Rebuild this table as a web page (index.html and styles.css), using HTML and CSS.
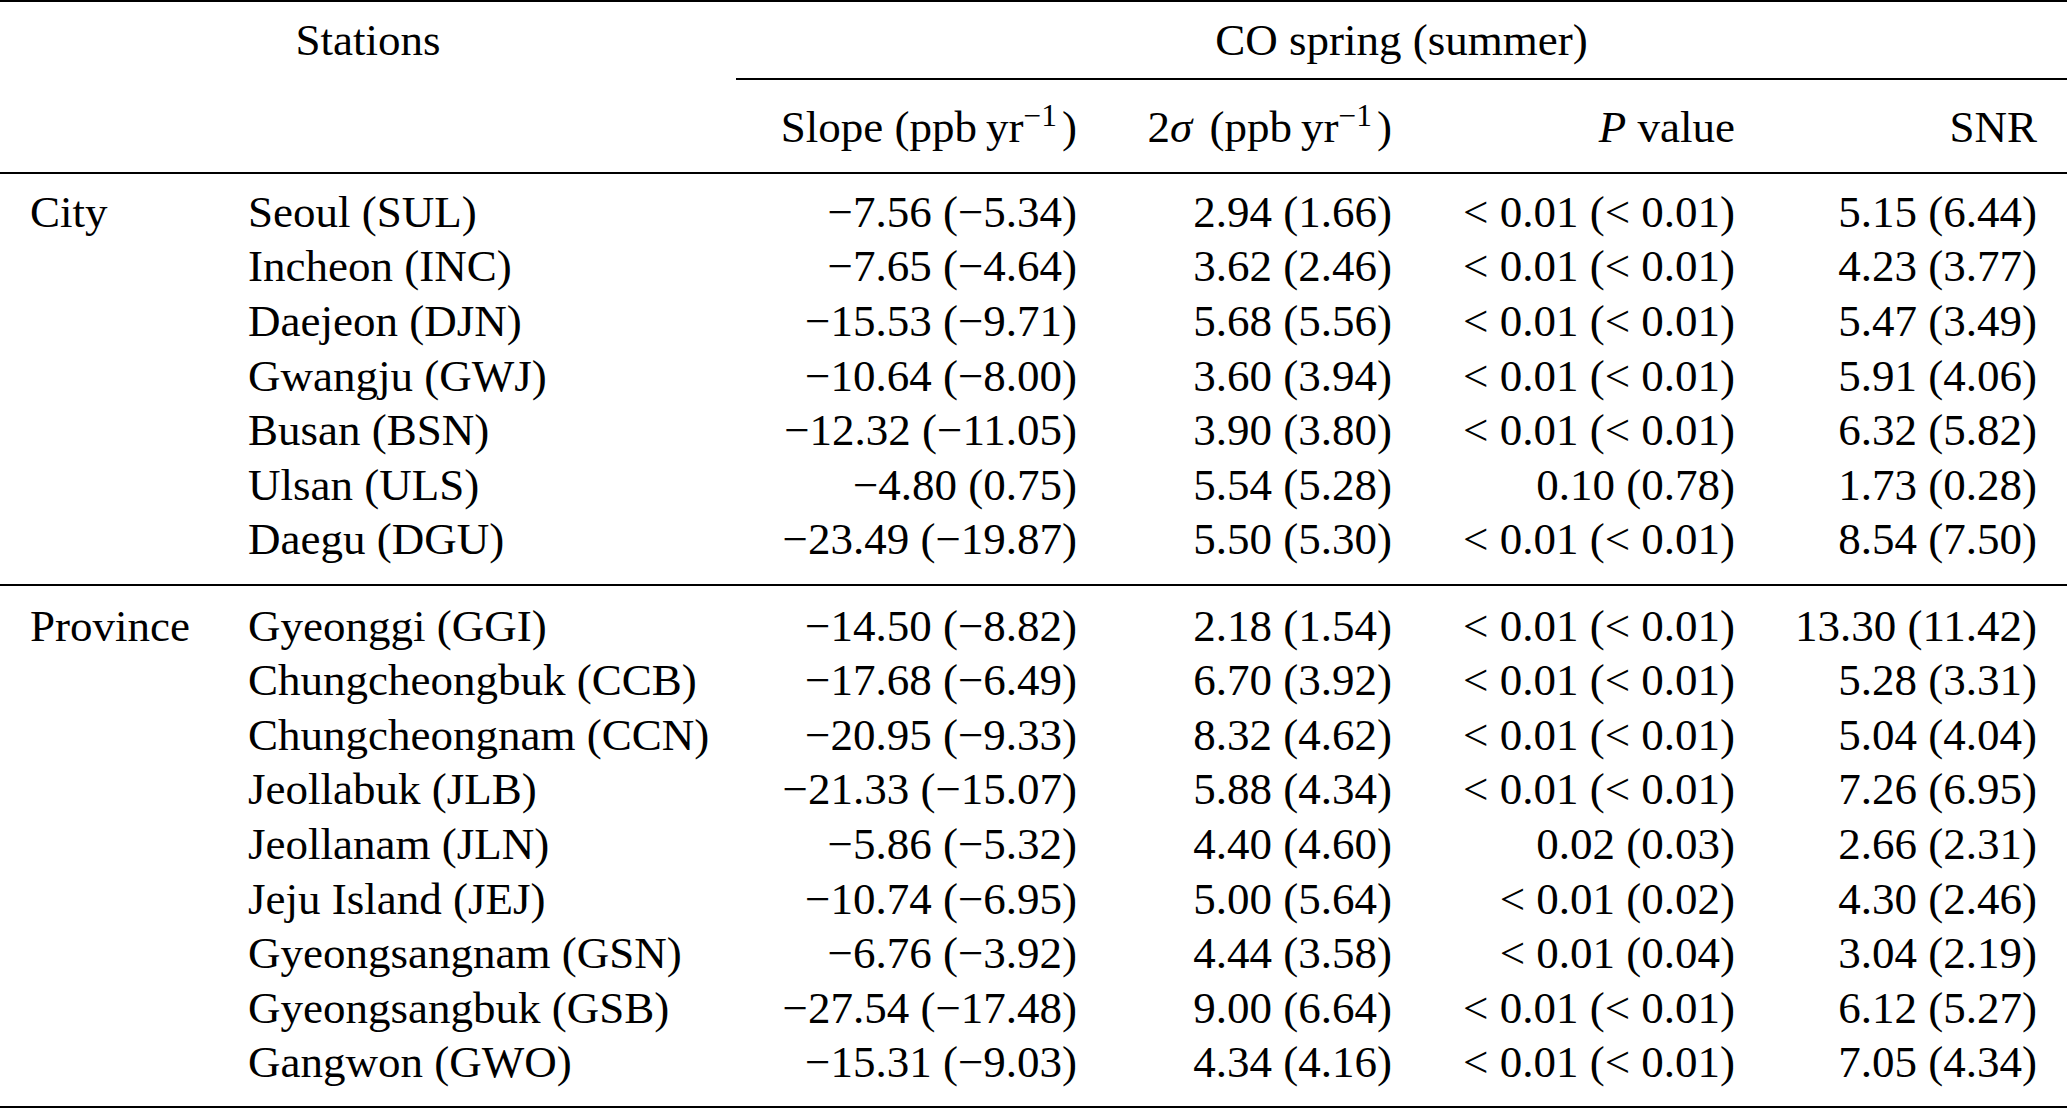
FILE: index.html
```html
<!DOCTYPE html>
<html lang="en">
<head>
<meta charset="utf-8">
<title>CO trends</title>
<link rel="stylesheet" href="styles.css">
</head>
<body>
<table class="tbl">
  <colgroup>
    <col class="c1"><col class="c2"><col class="c3"><col class="c4"><col class="c5"><col class="c6">
  </colgroup>
  <thead>
    <tr class="h1">
      <th colspan="2" class="ctr">Stations</th>
      <th colspan="4" class="ctr cmid">CO spring (summer)</th>
    </tr>
    <tr class="h2">
      <th></th>
      <th></th>
      <th class="r">Slope (ppb&#8201;yr<span class="sup">−1</span>)</th>
      <th class="r">2<i class="sig">σ</i> (ppb&#8201;yr<span class="sup">−1</span>)</th>
      <th class="r"><i>P</i> value</th>
      <th class="r">SNR</th>
    </tr>
  </thead>
  <tbody class="grp city">
    <tr><td>City</td><td>Seoul (SUL)</td><td class="r">−7.56 (−5.34)</td><td class="r">2.94 (1.66)</td><td class="r">&lt; 0.01 (&lt; 0.01)</td><td class="r">5.15 (6.44)</td></tr>
    <tr><td></td><td>Incheon (INC)</td><td class="r">−7.65 (−4.64)</td><td class="r">3.62 (2.46)</td><td class="r">&lt; 0.01 (&lt; 0.01)</td><td class="r">4.23 (3.77)</td></tr>
    <tr><td></td><td>Daejeon (DJN)</td><td class="r">−15.53 (−9.71)</td><td class="r">5.68 (5.56)</td><td class="r">&lt; 0.01 (&lt; 0.01)</td><td class="r">5.47 (3.49)</td></tr>
    <tr><td></td><td>Gwangju (GWJ)</td><td class="r">−10.64 (−8.00)</td><td class="r">3.60 (3.94)</td><td class="r">&lt; 0.01 (&lt; 0.01)</td><td class="r">5.91 (4.06)</td></tr>
    <tr><td></td><td>Busan (BSN)</td><td class="r">−12.32 (−11.05)</td><td class="r">3.90 (3.80)</td><td class="r">&lt; 0.01 (&lt; 0.01)</td><td class="r">6.32 (5.82)</td></tr>
    <tr><td></td><td>Ulsan (ULS)</td><td class="r">−4.80 (0.75)</td><td class="r">5.54 (5.28)</td><td class="r">0.10 (0.78)</td><td class="r">1.73 (0.28)</td></tr>
    <tr><td></td><td>Daegu (DGU)</td><td class="r">−23.49 (−19.87)</td><td class="r">5.50 (5.30)</td><td class="r">&lt; 0.01 (&lt; 0.01)</td><td class="r">8.54 (7.50)</td></tr>
  </tbody>
  <tbody class="grp prov">
    <tr><td>Province</td><td>Gyeonggi (GGI)</td><td class="r">−14.50 (−8.82)</td><td class="r">2.18 (1.54)</td><td class="r">&lt; 0.01 (&lt; 0.01)</td><td class="r">13.30 (11.42)</td></tr>
    <tr><td></td><td>Chungcheongbuk (CCB)</td><td class="r">−17.68 (−6.49)</td><td class="r">6.70 (3.92)</td><td class="r">&lt; 0.01 (&lt; 0.01)</td><td class="r">5.28 (3.31)</td></tr>
    <tr><td></td><td>Chungcheongnam (CCN)</td><td class="r">−20.95 (−9.33)</td><td class="r">8.32 (4.62)</td><td class="r">&lt; 0.01 (&lt; 0.01)</td><td class="r">5.04 (4.04)</td></tr>
    <tr><td></td><td>Jeollabuk (JLB)</td><td class="r">−21.33 (−15.07)</td><td class="r">5.88 (4.34)</td><td class="r">&lt; 0.01 (&lt; 0.01)</td><td class="r">7.26 (6.95)</td></tr>
    <tr><td></td><td>Jeollanam (JLN)</td><td class="r">−5.86 (−5.32)</td><td class="r">4.40 (4.60)</td><td class="r">0.02 (0.03)</td><td class="r">2.66 (2.31)</td></tr>
    <tr><td></td><td>Jeju Island (JEJ)</td><td class="r">−10.74 (−6.95)</td><td class="r">5.00 (5.64)</td><td class="r">&lt; 0.01 (0.02)</td><td class="r">4.30 (2.46)</td></tr>
    <tr><td></td><td>Gyeongsangnam (GSN)</td><td class="r">−6.76 (−3.92)</td><td class="r">4.44 (3.58)</td><td class="r">&lt; 0.01 (0.04)</td><td class="r">3.04 (2.19)</td></tr>
    <tr><td></td><td>Gyeongsangbuk (GSB)</td><td class="r">−27.54 (−17.48)</td><td class="r">9.00 (6.64)</td><td class="r">&lt; 0.01 (&lt; 0.01)</td><td class="r">6.12 (5.27)</td></tr>
    <tr><td></td><td>Gangwon (GWO)</td><td class="r">−15.31 (−9.03)</td><td class="r">4.34 (4.16)</td><td class="r">&lt; 0.01 (&lt; 0.01)</td><td class="r">7.05 (4.34)</td></tr>
  </tbody>
</table>
</body>
</html>
```

FILE: styles.css
```css
html, body {
  margin: 0;
  padding: 0;
  background: #fff;
}

.tbl {
  width: 2067px;
  table-layout: fixed;
  border-collapse: separate;
  border-spacing: 0;
  border-top: 2px solid #000;
  font-family: "Liberation Serif", "Times New Roman", serif;
  font-size: 45px;
  line-height: 54.6px;
  color: #000;
}

.c1 { width: 218px; }
.c2 { width: 518px; }
.c3 { width: 371px; }
.c4 { width: 315px; }
.c5 { width: 343px; }
.c6 { width: 302px; }

.tbl th,
.tbl td {
  padding: 0 30px;
  font-weight: normal;
  text-align: left;
  vertical-align: top;
  white-space: nowrap;
}

.tbl .ctr { text-align: center; }
.tbl .r { text-align: right; }

.h1 th {
  padding-top: 10.5px;
  padding-bottom: 11px;
}

.h1 .cmid {
  border-bottom: 2px solid #000;
}

.h2 th {
  padding-top: 20px;
  padding-bottom: 17px;
  border-bottom: 2.5px solid #000;
}

.sup {
  font-size: 0.7em;
  line-height: 0;
  position: relative;
  top: -0.5em;
  margin-right: 5px;
}

.sig {
  margin-right: 6px;
}

.city tr:first-child td { padding-top: 11.2px; }
.city tr:last-child td {
  padding-bottom: 17.1px;
  border-bottom: 2px solid #000;
}

.prov tr:first-child td { padding-top: 12.5px; }
.prov tr:last-child td {
  padding-bottom: 16px;
  border-bottom: 2px solid #000;
}
```
